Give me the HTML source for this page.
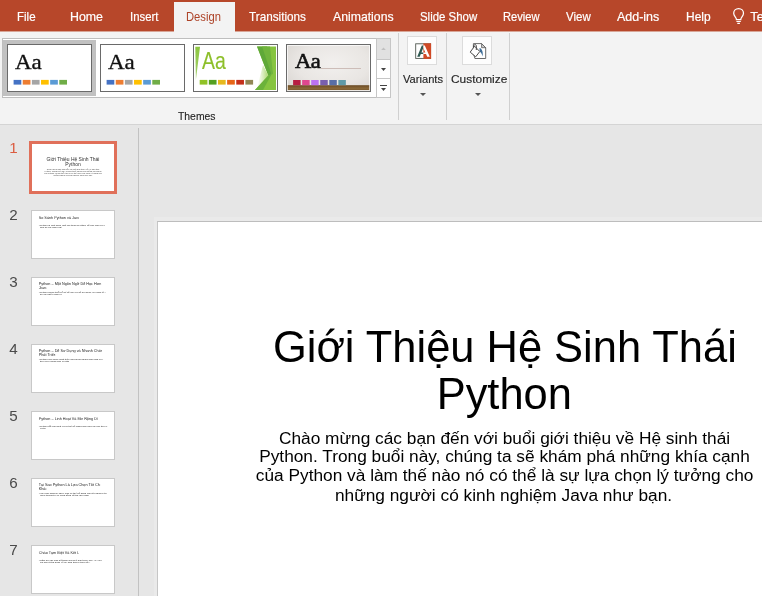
<!DOCTYPE html>
<html>
<head>
<meta charset="utf-8">
<title>PowerPoint</title>
<style>
*{box-sizing:border-box;margin:0;padding:0}
html,body{width:762px;height:596px;overflow:hidden;background:#e6e6e6;font-family:"Liberation Sans",sans-serif;}
#app{position:relative;width:762px;height:596px;overflow:hidden;background:#e6e6e6;will-change:transform}
.abs{position:absolute}
/* tab bar */
#tabbar{position:absolute;left:0;top:0;width:762px;height:31px;background:#b7472a}
#acttab{position:absolute;left:174px;top:2px;width:61px;height:30px;background:#f3f3f3}
.tab{position:absolute;transform-origin:0 50%;top:9.700px;font-size:12.8px;line-height:14px;color:#fff;white-space:nowrap;-webkit-text-stroke:0.200px currentColor}
.tab.act{color:#ad4328;-webkit-text-stroke:0}
/* ribbon */
#ribbon{position:absolute;left:0;top:32px;width:762px;height:93px;background:#f3f3f3;border-bottom:1px solid #d4d4d4}
.lab{position:absolute;transform-origin:0 50%;-webkit-text-stroke:0.150px #262626;font-size:11.3px;line-height:14px;color:#262626;white-space:nowrap}
.vsep{position:absolute;top:33px;width:1px;height:87px;background:#d0d0d0}
/* gallery */
#gal{position:absolute;left:2px;top:38px;width:389px;height:60px;background:#fff;border:1px solid #bebebe}
.th{position:absolute;top:44px;height:48px;width:85px;border:1px solid #6a6a6a;background:#fff;overflow:hidden}
.sq{position:absolute;top:35px;height:5px;width:7.6px}
.aa{position:absolute;white-space:nowrap}
.ibox{position:absolute;top:36px;width:29px;height:29px;background:#fdfdfd;border:1px solid #dcdcdc}
/* slide panel */
.num{position:absolute;margin-top:-1.800px;left:9.300px;width:10px;font-size:15.200px;line-height:16px;color:#4a4a4a;text-align:left}
.sth{position:absolute;left:31px;width:84px;height:49px;background:#fff;border:1px solid #c8c8c8;overflow:hidden}
.mini{position:absolute;left:0;top:0;width:696px;height:392px;transform-origin:0 0;transform:scale(0.1178);color:#222}
.mini .t{position:absolute;left:57px;top:40px;width:620px;font-size:32px;line-height:32.500px;white-space:nowrap}
.mini .b{position:absolute;left:67px;top:108px;width:600px;font-size:21px;line-height:21.500px}
.mini .bu{display:inline-block;width:10px}
.mini .ln{overflow:hidden;white-space:nowrap}
/* main slide */
#slide{position:absolute;left:157px;top:221px;width:700px;height:400px;background:#fff;border-top:1px solid #bdbdbd;border-left:1px solid #c6c6c6;box-shadow:0 -1px 0 3px #eaeaea}
.tl{position:absolute;left:157px;width:696px;text-align:center;font-size:43.45px;line-height:47px;height:47px;color:#000;white-space:nowrap}
.sl{position:absolute;left:157px;width:696px;text-align:center;font-size:17.3px;line-height:18px;height:18px;color:#000;white-space:nowrap}
</style>
</head>
<body>
<div id="app">

<!-- ======= TAB BAR ======= -->
<div id="tabbar"></div>
<div class="abs" style="left:0;top:31px;width:762px;height:1px;background:#d8a596"></div>
<div id="acttab"></div>
<span class="tab" style="left:17.00px;transform:scaleX(0.9018)">File</span>
<span class="tab" style="left:70.30px;transform:scaleX(0.9666)">Home</span>
<span class="tab" style="left:130.40px;transform:scaleX(0.8871)">Insert</span>
<span class="tab act" style="left:186.40px;transform:scaleX(0.8759)">Design</span>
<span class="tab" style="left:249.30px;transform:scaleX(0.9159)">Transitions</span>
<span class="tab" style="left:333.00px;transform:scaleX(0.9572)">Animations</span>
<span class="tab" style="left:419.70px;transform:scaleX(0.8933)">Slide Show</span>
<span class="tab" style="left:503.10px;transform:scaleX(0.8697)">Review</span>
<span class="tab" style="left:566.10px;transform:scaleX(0.8977)">View</span>
<span class="tab" style="left:617.00px;transform:scaleX(0.9749)">Add-ins</span>
<span class="tab" style="left:685.60px;transform:scaleX(0.9344)">Help</span>

<svg class="abs" style="left:731px;top:7px" width="16" height="19" viewBox="0 0 16 19">
  <path d="M7.6 1.6c-2.9 0-4.9 2.1-4.9 4.7 0 1.7.9 2.8 1.7 3.8.6.8 1 1.500 1 2.500h4.400c0-1 .4-1.700 1-2.500.8-1 1.700-2.100 1.700-3.800 0-2.600-2-4.700-4.900-4.700z" fill="none" stroke="#fff" stroke-width="1.250"/>
  <path d="M5.400 14.500h4.400M6.300 16.300h2.600" stroke="#fff" stroke-width="1.200" fill="none"/>
</svg>
<span class="tab" style="left:750.3px">Tell me</span>

<!-- ======= RIBBON ======= -->
<div id="ribbon"></div>
<div id="gal"></div>

<!-- theme 1 (selected) -->
<div class="abs" style="left:3px;top:40px;width:93px;height:56px;background:#c1c1c1"></div>
<div class="th" style="left:7px">
  <span class="aa" style="left:7px;top:5.400px;font-family:'Liberation Serif',serif;font-size:22px;line-height:24px;color:#111;transform:scaleX(1.045);transform-origin:0 0;-webkit-text-stroke:0.350px #111">Aa</span>
  <svg class="abs" style="left:0;top:0" width="83" height="46" viewBox="0 0 83 46"><rect x="5.60" y="34.900" width="7.7" height="4.700" fill="#4472c4"/><rect x="14.74" y="34.900" width="7.7" height="4.700" fill="#ed7d31"/><rect x="23.88" y="34.900" width="7.7" height="4.700" fill="#a5a5a5"/><rect x="33.02" y="34.900" width="7.7" height="4.700" fill="#ffc000"/><rect x="42.16" y="34.900" width="7.7" height="4.700" fill="#5b9bd5"/><rect x="51.30" y="34.900" width="7.7" height="4.700" fill="#70ad47"/></svg>
</div>
<!-- theme 2 -->
<div class="th" style="left:100px">
  <span class="aa" style="left:7px;top:5.400px;font-family:'Liberation Serif',serif;font-size:22px;line-height:24px;color:#111;transform:scaleX(1.045);transform-origin:0 0;-webkit-text-stroke:0.350px #111">Aa</span>
  <svg class="abs" style="left:0;top:0" width="83" height="46" viewBox="0 0 83 46"><rect x="5.60" y="34.900" width="7.7" height="4.700" fill="#4472c4"/><rect x="14.74" y="34.900" width="7.7" height="4.700" fill="#ed7d31"/><rect x="23.88" y="34.900" width="7.7" height="4.700" fill="#a5a5a5"/><rect x="33.02" y="34.900" width="7.7" height="4.700" fill="#ffc000"/><rect x="42.16" y="34.900" width="7.7" height="4.700" fill="#5b9bd5"/><rect x="51.30" y="34.900" width="7.7" height="4.700" fill="#70ad47"/></svg>
</div>
<!-- theme 3 (Facet) -->
<div class="th" style="left:193px">
  <svg class="abs" style="left:0;top:0" width="83" height="46" viewBox="0 0 83 46">
    <defs>
      <linearGradient id="gfade" x1="0" y1="0" x2="1" y2="0"><stop offset="0" stop-color="#c8e6a0" stop-opacity="0"/><stop offset="1" stop-color="#a8d66a" stop-opacity="1"/></linearGradient>
      <linearGradient id="gleft" x1="0" y1="0" x2="0" y2="1"><stop offset="0" stop-color="#8cc63f"/><stop offset="1" stop-color="#a4d070"/></linearGradient>
    </defs>
    <polygon points="1.300,1.700 6,1.700 1.900,35" fill="url(#gleft)"/>
    <polygon points="63,1.500 82,1.500 82,45 61,45 74.200,30.200" fill="#86c440"/>
    <polygon points="63,1.500 73,1.500 77.500,29.500 74.200,30.200" fill="#5fa838"/>
    <polygon points="68,1.500 76,1.500 79,29 77.500,29.500" fill="#70b43c"/>
    <polygon points="74.200,30.200 77.500,29.500 69,45 61,45" fill="#6bb23a"/>
    <polygon points="69,20 74.200,30.200 63,43" fill="url(#gfade)"/>
  </svg>
  <span class="aa" style="left:8.100px;top:3.500px;font-size:23.400px;line-height:24px;color:#8dbf2a;transform:scaleX(0.830);transform-origin:0 0;-webkit-text-stroke:0.150px #8dbf2a">Aa</span>
  <svg class="abs" style="left:0;top:0" width="83" height="46" viewBox="0 0 83 46"><rect x="5.70" y="34.900" width="7.7" height="4.700" fill="#90c226"/><rect x="14.84" y="34.900" width="7.7" height="4.700" fill="#54a021"/><rect x="23.98" y="34.900" width="7.7" height="4.700" fill="#e6b91e"/><rect x="33.12" y="34.900" width="7.7" height="4.700" fill="#e76618"/><rect x="42.26" y="34.900" width="7.7" height="4.700" fill="#c42f1a"/><rect x="51.40" y="34.900" width="7.7" height="4.700" fill="#918655"/></svg>
</div>
<!-- theme 4 (Gallery) -->
<div class="th" style="left:286px;background:radial-gradient(ellipse at 55% 40%,#f2f0ee 0%,#e9e6e3 55%,#d6d2ce 100%)">
  <svg class="abs" style="left:0;top:0" width="83" height="46" viewBox="0 0 83 46"><defs><linearGradient id="wood" x1="0" y1="0" x2="0" y2="1"><stop offset="0" stop-color="#6a4a24"/><stop offset="0.600" stop-color="#8a6838"/><stop offset="1" stop-color="#7a5a30"/></linearGradient></defs><rect x="0" y="40.200" width="83" height="5.100" fill="url(#wood)"/></svg>
  <div class="abs" style="left:34px;top:23px;width:40px;height:1px;background:#cdbdb8"></div>
  <span class="aa" style="left:7.600px;top:3.700px;font-family:'Liberation Serif',serif;font-size:22px;line-height:24px;color:#111;-webkit-text-stroke:0.600px #111;letter-spacing:-0.500px;transform:scaleX(1.030);transform-origin:0 0">Aa</span>
  <svg class="abs" style="left:0;top:0" width="83" height="46" viewBox="0 0 83 46"><rect x="6.10" y="35" width="7.500" height="5.200" fill="#b71e42"/><rect x="15.15" y="35" width="7.500" height="5.200" fill="#de478e"/><rect x="24.20" y="35" width="7.500" height="5.200" fill="#bc72f0"/><rect x="33.25" y="35" width="7.500" height="5.200" fill="#795faf"/><rect x="42.30" y="35" width="7.500" height="5.200" fill="#586ea6"/><rect x="51.35" y="35" width="7.500" height="5.200" fill="#5f9aa8"/></svg>
  <div class="abs" style="left:0;top:0;width:83px;height:46px;border:1px solid rgba(255,255,255,0.700)"></div>
</div>
<!-- gallery scroll buttons -->
<div class="abs" style="left:376px;top:38px;width:15px;height:22px;background:#e1e1e1;border:1px solid #c6c6c6"></div>
<div class="abs" style="left:376px;top:59px;width:15px;height:20px;background:#fff;border:1px solid #c6c6c6"></div>
<div class="abs" style="left:376px;top:78px;width:15px;height:20px;background:#fff;border:1px solid #c6c6c6"></div>
<svg class="abs" style="left:376px;top:38px" width="15" height="59" viewBox="0 0 15 59">
  <polygon points="5.200,12 9.800,12 7.500,9.500" fill="#c0c0c0"/>
  <polygon points="5,30 10,30 7.500,33" fill="#444"/>
  <rect x="4" y="47" width="7" height="1" fill="#444"/>
  <polygon points="5,50 10,50 7.500,53" fill="#444"/>
</svg>

<!-- group separators -->
<div class="vsep" style="left:398px"></div>
<div class="vsep" style="left:446px"></div>
<div class="vsep" style="left:509px"></div>

<!-- Variants button -->
<div class="ibox" style="left:407px;width:30px"></div>
<svg class="abs" style="left:415px;top:43px" width="17" height="17" viewBox="0 0 17 17">
  <defs>
    <clipPath id="cl"><rect x="0" y="0" width="8.400" height="17"/></clipPath>
    <clipPath id="cr"><rect x="8.400" y="0" width="9" height="17"/></clipPath>
  </defs>
  <rect x="0.700" y="0.800" width="14.900" height="14.600" fill="#fff" stroke="#505850" stroke-width="0.900"/>
  <rect x="8.400" y="0.300" width="7.700" height="15.600" fill="#d04a26"/>
  <path clip-path="url(#cl)" fill-rule="evenodd" fill="#2f5a52" d="M2.200 13.800 L6.800 2.600 L9.800 2.600 L14.800 13.800 L12.200 13.800 L11 10.900 L5.800 10.900 L4.700 13.800 Z M8.300 4.900 L10.400 9.500 L6.400 9.500 Z"/>
  <path clip-path="url(#cr)" fill-rule="evenodd" fill="#fff" d="M2.200 13.800 L6.800 2.600 L9.800 2.600 L14.800 13.800 L12.200 13.800 L11 10.900 L5.800 10.900 L4.700 13.800 Z M8.300 4.900 L10.400 9.500 L6.400 9.500 Z"/>
</svg>
<svg class="abs" style="left:419px;top:92px" width="8" height="5" viewBox="0 0 8 5"><polygon points="1,1 7,1 4,4" fill="#555"/></svg>

<!-- Customize button -->
<div class="ibox" style="left:462px;width:30px"></div>
<svg class="abs" style="left:468px;top:41px" width="22" height="20" viewBox="0 0 22 20">
  <path d="M5.400 2.600H13.600L17.700 6.700V17.500H6.900L5.400 12Z" fill="#fff" stroke="#5a5a5a" stroke-width="0.900"/>
  <path d="M13.600 2.600V6.700H17.700Z" fill="#cfcfcf" stroke="#5a5a5a" stroke-width="0.800"/>
  <path d="M11.500 7C13.600 7.500 15.300 10 14.700 15.600C14.200 13.500 13.200 11.600 11.700 10.400Z" fill="#3f6f9a"/>
  <path d="M2.200 11.100L6.600 5.200L11.800 10.500L7.700 15.800Z" fill="#fff" stroke="#4a4a4a" stroke-width="1"/>
  <path d="M5.400 6.200C5.200 3.200 8.300 2.900 8.300 4.800V9" fill="none" stroke="#4a4a4a" stroke-width="1"/>
</svg>
<svg class="abs" style="left:474px;top:92px" width="8" height="5" viewBox="0 0 8 5"><polygon points="1,1 7,1 4,4" fill="#555"/></svg>

<span class="lab" style="left:402.90px;top:72px;transform:scaleX(0.9850)">Variants</span>
<span class="lab" style="left:450.50px;top:72px;transform:scaleX(1.0548)">Customize</span>
<span class="lab" style="left:178.00px;top:109px;transform:scaleX(0.9188)">Themes</span>


<!-- ======= SLIDE PANEL ======= -->
<div class="abs" style="left:138px;top:128px;width:1px;height:468px;background:#c2c2c2"></div>

<span class="num" style="top:142px;color:#db5c40">1</span>
<div class="abs" style="left:29px;top:141px;width:88px;height:53px;background:#fff;border:3px solid #e0705a;overflow:hidden">
  <div class="mini" style="left:-0.500px;top:-0.500px">
    <div style="position:absolute;left:0;top:108px;width:696px;text-align:center;font-size:42px;line-height:42.500px;color:#333">Giới Thiệu Hệ Sinh Thái<br>Python</div>
    <div style="position:absolute;left:0;top:207px;width:696px;text-align:center;font-size:17px;line-height:18px;color:#444">Chào mừng các bạn đến với buổi giới thiệu về Hệ sinh thái<br>Python. Trong buổi này, chúng ta sẽ khám phá những khía cạnh<br>của Python và làm thế nào nó có thể là sự lựa chọn lý tưởng cho<br>những người có kinh nghiệm Java như bạn.</div>
  </div>
</div>

<span class="num" style="top:209px">2</span>
<div class="sth" style="top:210px"><div class="mini">
  <div class="t" style="top:45px"><div class="ln" style="width:341px">So Sánh Python và Java</div></div>
  <div class="b"><div class="ln" style="width:562px;margin-left:-10px"><span class="bu">•</span>Python là một ngôn ngữ lập trình đa năng, dễ học hơn và có cú pháp ngắn gọn hơn</div><div class="ln" style="width:185px">gọn so với ngôn ngữ Java.</div></div>
</div></div>

<span class="num" style="top:276px">3</span>
<div class="sth" style="top:277px"><div class="mini">
  <div class="t" style="top:33px"><div class="ln" style="width:531px">Python – Một Ngôn Ngữ Dễ Học Hơn So Với</div><div class="ln" style="width:65px">Java</div></div>
  <div class="b"><div class="ln" style="width:566px;margin-left:-10px"><span class="bu">•</span>Python được thiết kế để dễ học và dễ sử dụng, cú pháp rõ ràng, dễ đọc hơn nhiều</div><div class="ln" style="width:185px">so với nhiều ngôn ngữ khác.</div></div>
</div></div>

<span class="num" style="top:343px">4</span>
<div class="sth" style="top:344px"><div class="mini">
  <div class="t" style="top:33px"><div class="ln" style="width:536px">Python – Dễ Sử Dụng và Nhanh Chóng Để</div><div class="ln" style="width:140px">Phát Triển</div></div>
  <div class="b"><div class="ln" style="width:546px;margin-left:-10px"><span class="bu">•</span>Python cho phép phát triển ứng dụng nhanh hơn nhờ cú pháp ngắn gọn và nhiều</div><div class="ln" style="width:255px">thư viện phong phú có sẵn cho bạn.</div></div>
</div></div>

<span class="num" style="top:410px">5</span>
<div class="sth" style="top:411px"><div class="mini">
  <div class="t" style="top:45px"><div class="ln" style="width:501px">Python – Linh Hoạt Và Mở Rộng Dễ Dàng</div></div>
  <div class="b"><div class="ln" style="width:581px;margin-left:-10px"><span class="bu">•</span>Python rất linh hoạt và có thể dễ dàng mở rộng với các thư viện bên ngoài khác</div><div class="ln" style="width:50px">và tích hợp.</div></div>
</div></div>

<span class="num" style="top:477px">6</span>
<div class="sth" style="top:478px"><div class="mini">
  <div class="t" style="top:33px"><div class="ln" style="width:521px">Tại Sao Python Là Lựa Chọn Tốt Cho Bạn Và</div><div class="ln" style="width:65px">Khác</div></div>
  <div class="b"><div class="ln" style="width:576px;margin-left:-10px"><span class="bu">•</span>Với kinh nghiệm Java, bạn có thể dễ dàng chuyển sang Python nhờ các khái niệm</div><div class="ln" style="width:416px">niệm tương tự và cộng đồng hỗ trợ lớn mạnh của Python luôn giúp bạn.</div></div>
</div></div>

<span class="num" style="top:544px">7</span>
<div class="sth" style="top:545px"><div class="mini">
  <div class="t" style="top:45px"><div class="ln" style="width:341px">Chào Tạm Biệt Và Kết Luận</div></div>
  <div class="b"><div class="ln" style="width:534px;margin-left:-10px"><span class="bu">•</span>Cảm ơn các bạn đã tham gia buổi giới thiệu này. Hy vọng các bạn đã có được</div><div class="ln" style="width:426px">cái nhìn tổng quan về hệ sinh thái Python rồi và sẽ dùng.</div></div>
</div></div>

<!-- ======= MAIN SLIDE ======= -->
<div id="slide"></div>
<div class="tl" style="top:323.700px;left:156.900px">Giới Thiệu Hệ Sinh Thái</div>
<div class="tl" style="top:370.700px;left:156.300px">Python</div>
<div class="sl" style="top:429.300px;left:156.600px">Chào mừng các bạn đến với buổi giới thiệu về Hệ sinh thái</div>
<div class="sl" style="top:447.400px;left:156.500px">Python. Trong buổi này, chúng ta sẽ khám phá những khía cạnh</div>
<div class="sl" style="top:466.200px;left:156.600px">của Python và làm thế nào nó có thể là sự lựa chọn lý tưởng cho</div>
<div class="sl" style="top:485.600px;left:155.500px">những người có kinh nghiệm Java như bạn.</div>

</div>
</body>
</html>
